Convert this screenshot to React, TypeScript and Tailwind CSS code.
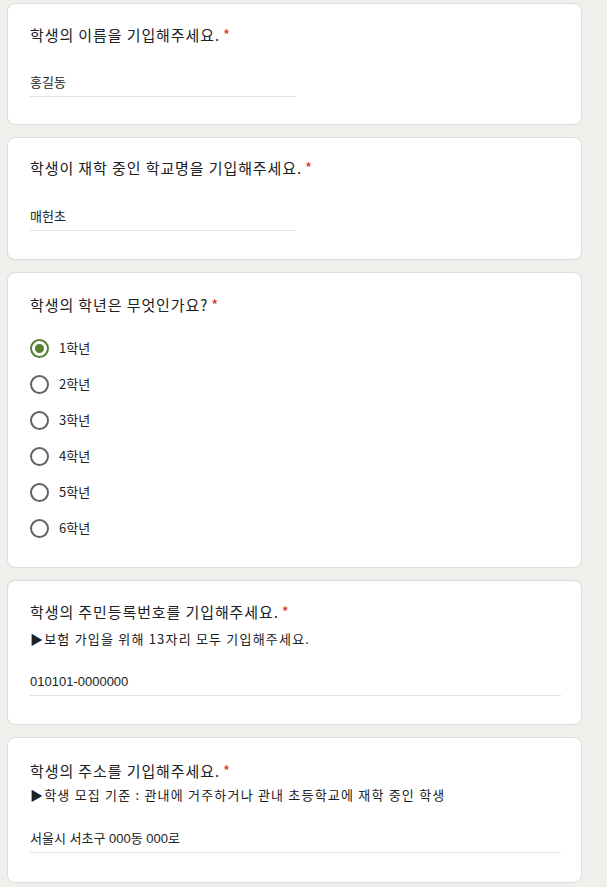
import React from "react";

const font = { fontFamily: '"Noto Sans CJK KR", "Noto Sans", sans-serif' };

const grades = ["1학년", "2학년", "3학년", "4학년", "5학년", "6학년"];

const Title = ({ text }: { text: string }) => (
  <div className="text-[15px] leading-5 text-[#202124] tracking-[0.9px]">
    {text}
    <span className="text-[#d93025] ml-[3px]">*</span>
  </div>
);

const Answer = ({ value, wide }: { value: string; wide?: boolean }) => (
  <div
    className={`${wide ? "w-[531px]" : "w-[266px]"} border-b border-[#e0e0e0] pb-[3px] text-[13px] leading-5 text-[#202124]`}
    style={{ fontFamily: '"Liberation Sans", "Noto Sans CJK KR", sans-serif' }}
  >
    {value}
  </div>
);

const Card = ({ children, className = "" }: { children: React.ReactNode; className?: string }) => (
  <div className={`w-[575px] bg-white border border-[#dadce0] rounded-lg px-[22px] ${className}`}>{children}</div>
);

export default function App() {
  return (
    <div className="min-h-[887px] w-[607px] bg-[#eef0eb] pl-[7px] pt-[3px] flex flex-col gap-[12px]" style={font}>
      {/* 이름 */}
      <Card className="h-[122px] pt-[21px]">
        <Title text="학생의 이름을 기입해주세요." />
        <div className="mt-[28px]">
          <Answer value="홍길동" />
        </div>
      </Card>

      {/* 학교명 */}
      <Card className="h-[123px] pt-[20px]">
        <Title text="학생이 재학 중인 학교명을 기입해주세요." />
        <div className="mt-[29px]">
          <Answer value="매헌초" />
        </div>
      </Card>

      {/* 학년 */}
      <Card className="h-[296px] pt-[22px]">
        <Title text="학생의 학년은 무엇인가요?" />
        <div className="mt-[23px] flex flex-col gap-[16px]">
          {grades.map((g, i) => (
            <div key={g} className="flex items-center h-5">
              {i === 0 ? (
                <div className="w-[19px] h-[19px] rounded-full border-2 border-[#55802d] flex items-center justify-center">
                  <div className="w-[9px] h-[9px] rounded-full bg-[#55802d]" />
                </div>
              ) : (
                <div className="w-[19px] h-[19px] rounded-full border-2 border-[#5f6368]" />
              )}
              <span className="ml-[10px] text-[13px] text-[#202124]">{g}</span>
            </div>
          ))}
        </div>
      </Card>

      {/* 주민등록번호 */}
      <Card className="h-[145px] pt-[21px]">
        <Title text="학생의 주민등록번호를 기입해주세요." />
        <div className="mt-[7px] text-[13px] leading-5 text-[#202124] tracking-[1.2px]">
          ▶보험 가입을 위해 13자리 모두 기입해주세요.
        </div>
        <div className="mt-[23px]">
          <Answer value="010101-0000000" wide />
        </div>
      </Card>

      {/* 주소 */}
      <Card className="h-[146px] pt-[23px]">
        <Title text="학생의 주소를 기입해주세요." />
        <div className="mt-[4px] text-[13px] leading-5 text-[#202124] tracking-[1.2px]">
          ▶학생 모집 기준 : 관내에 거주하거나 관내 초등학교에 재학 중인 학생
        </div>
        <div className="mt-[24px]">
          <Answer value="서울시 서초구 000동 000로" wide />
        </div>
      </Card>
    </div>
  );
}
